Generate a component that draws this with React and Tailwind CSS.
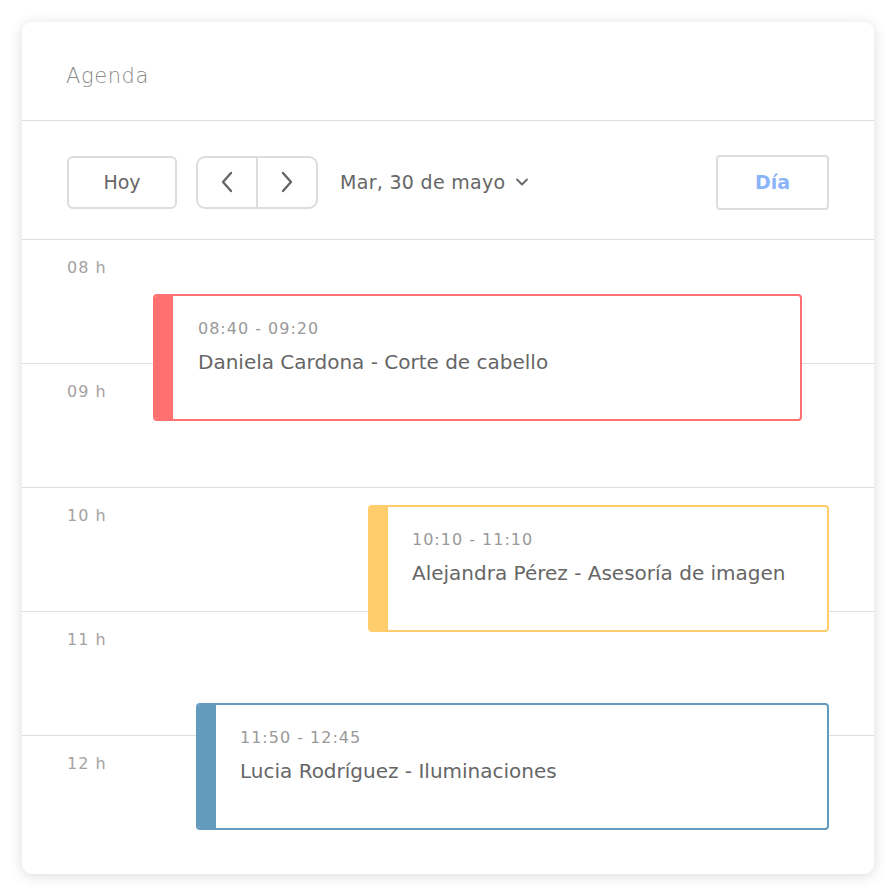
import React from "react";

const hours = ["08 h", "09 h", "10 h", "11 h", "12 h"];

const events = [
  {
    time: "08:40 - 09:20",
    title: "Daniela Cardona - Corte de cabello",
    pos: "left-[131px] top-[54px] w-[649px]",
    border: "border-[#ff7070]",
    bar: "bg-[#ff7070]",
    pad: "pl-[25px]",
  },
  {
    time: "10:10 - 11:10",
    title: "Alejandra Pérez - Asesoría de imagen",
    pos: "left-[346px] top-[265px] w-[461px]",
    border: "border-[#ffcd6b]",
    bar: "bg-[#ffcd6b]",
    pad: "pl-[24px]",
  },
  {
    time: "11:50 - 12:45",
    title: "Lucia Rodríguez - Iluminaciones",
    pos: "left-[174px] top-[463px] w-[633px]",
    border: "border-[#639bbd]",
    bar: "bg-[#639bbd]",
    pad: "pl-[24px]",
  },
];

function Chevron({ dir }) {
  return (
    <svg width="14" height="22" viewBox="0 0 14 22" fill="none">
      <path
        d={dir === "left" ? "M11 2 L3 11 L11 20" : "M3 2 L11 11 L3 20"}
        stroke="#666"
        strokeWidth="2.4"
        strokeLinecap="round"
        strokeLinejoin="round"
      />
    </svg>
  );
}

export default function App() {
  return (
    <div
      className="w-[896px] h-[896px] bg-white p-[22px]"
      style={{ fontFamily: "'DejaVu Sans', sans-serif" }}
    >
      <div className="w-[852px] h-[852px] bg-white rounded-[10px] shadow-[0_2px_14px_rgba(0,0,0,0.14)] overflow-hidden flex flex-col">
        {/* header */}
        <div className="h-[99px] border-b border-[#dedede] flex items-center pl-[44px] pt-[12px]">
          <span className="text-[21px] font-light tracking-[0.6px] text-[#888]">Agenda</span>
        </div>

        {/* toolbar */}
        <div className="h-[119px] border-b border-[#dedede] flex items-center pl-[45px] pr-[45px] pt-[4px]">
          <button className="w-[110px] h-[53px] border-2 border-[#e0dcdc] rounded-[6px] text-[19px] text-[#666]">
            Hoy
          </button>
          <div className="ml-[19px] h-[53px] w-[122px] border-2 border-[#e0dcdc] rounded-[9px] flex">
            <button className="flex-1 flex items-center justify-center border-r-2 border-[#e0dcdc]">
              <Chevron dir="left" />
            </button>
            <button className="flex-1 flex items-center justify-center">
              <Chevron dir="right" />
            </button>
          </div>
          <button className="ml-[22px] flex items-center gap-[10px] text-[19px] tracking-[0.3px] text-[#666]">
            Mar, 30 de mayo
            <svg width="14" height="10" viewBox="0 0 14 10" fill="none">
              <path d="M2 2.5 L7 7.5 L12 2.5" stroke="#666" strokeWidth="1.8" strokeLinecap="round" strokeLinejoin="round" />
            </svg>
          </button>
          <button className="ml-auto w-[113px] h-[55px] border-2 border-[#e0dcdc] rounded-[4px] text-[19px] font-bold text-[#8ab4f8]">
            Día
          </button>
        </div>

        {/* day grid */}
        <div className="relative flex-1">
          {hours.map((h, i) => (
            <div
              key={h}
              className={`h-[124px] pl-[45px] pt-[16px] ${i < hours.length - 1 ? "border-b border-[#dedede]" : ""}`}
            >
              <span className="text-[16px] tracking-[1px] text-[#a6a2a2]">{h}</span>
            </div>
          ))}

          {events.map((ev) => (
            <div
              key={ev.time}
              className={`absolute ${ev.pos} h-[127px] border-2 ${ev.border} rounded-[4px] bg-white flex overflow-hidden`}
            >
              <div className={`w-[18px] ${ev.bar}`} />
              <div className={`${ev.pad} pt-[21px]`}>
                <div className="text-[16px] tracking-[1px] text-[#999]">{ev.time}</div>
                <div className="mt-[6px] text-[20px] text-[#666]">{ev.title}</div>
              </div>
            </div>
          ))}
        </div>
      </div>
    </div>
  );
}
